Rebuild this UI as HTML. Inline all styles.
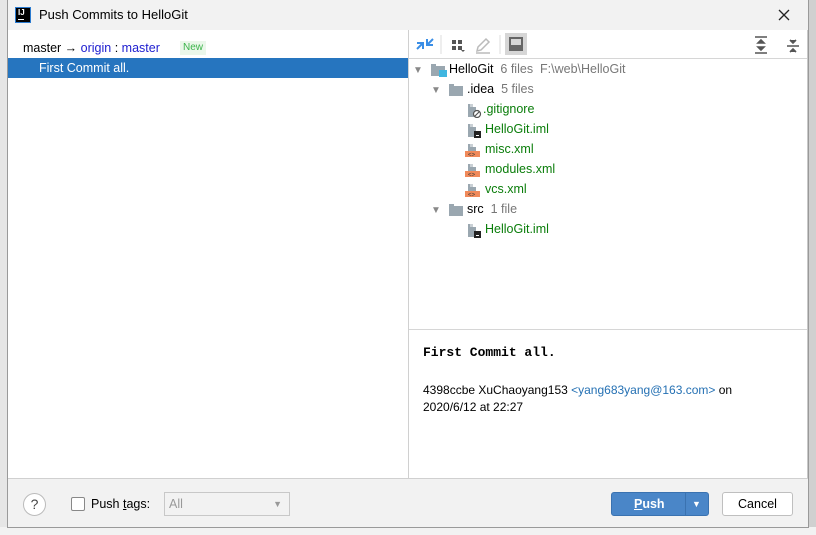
<!DOCTYPE html>
<html><head><meta charset="utf-8"><style>
*{margin:0;padding:0;box-sizing:border-box}
body{width:816px;height:535px;overflow:hidden;background:#f2f2f2;font-family:"Liberation Sans","Microsoft YaHei","Noto Sans CJK SC",sans-serif;font-size:12.5px;color:#000;position:relative}
.abs{position:absolute}
#bgl{left:0;top:0;width:7px;height:535px;background:#e6e6e6}
#bgb{left:0;top:527px;width:816px;height:8px;background:#f2f2f2}
#bgr{left:809px;top:0;width:7px;height:535px;background:#d0d0d0}
#dlg{left:7px;top:0;width:802px;height:528px;background:#f2f2f2;border:1px solid #9a9a9a;border-top:none}
#title{left:0;top:0;width:800px;height:30px;background:#f2f2f2}
#left{left:0;top:30px;width:401px;height:448px;background:#fff;border-right:1px solid #d0d0d0}
#right{left:401px;top:30px;width:399px;height:448px;background:#fff;border-right:1px solid #c8c8c8}
#foot{left:0;top:478px;width:800px;height:49px;background:#f2f2f2;border-top:1px solid #d0d0d0}
.row{position:absolute;height:20px;line-height:20px;white-space:nowrap}
.g{color:#0a7d0a}.gr{color:#777}
</style></head><body>
<div class="abs" id="bgl"></div><div class="abs" id="bgr"></div><div class="abs" id="bgb"></div>
<div class="abs" id="dlg">
 <div class="abs" id="title">
  <div class="abs" style="left:7px;top:7px;width:16px;height:16px;background:#000;border:1px solid #2b7bd0;color:#fff;font-size:8px;font-weight:bold;line-height:10px;padding-left:2px">IJ<div style="width:6px;height:1px;background:#fff;margin-top:1px"></div></div>
  <div class="abs" style="left:31px;top:7px;font-size:13px">Push Commits to HelloGit</div>
  <svg class="abs" style="left:770px;top:9px" width="12" height="12"><path d="M1 1L11 11M11 1L1 11" stroke="#222" stroke-width="1.3"/></svg>
 </div>
 <div class="abs" id="left">
  <div class="row" style="left:15px;top:8px">master → <span style="color:#2020d0">origin</span> : <span style="color:#2020d0">master</span></div>
  <div class="abs" style="left:172px;top:11px;height:14px;line-height:14px;padding:0 3px;background:#eaf7ea;color:#3cb44b;font-size:10px">New</div>
  <div class="row" style="left:0;top:28px;width:400px;background:#2675bf;color:#fff;padding-left:31px">First Commit all.</div>
 </div>
 <div class="abs" id="right">
  <svg class="abs" style="left:0;top:0" width="399" height="30">
   <path d="M8 19l6-6M8 13h6v6M24 9l-6 6M18 9v6h6" stroke="#3a8ee6" stroke-width="2" fill="none"/>
   <line x1="32" y1="5" x2="32" y2="24" stroke="#ddd"/>
   <rect x="43" y="10" width="4" height="4" fill="#555"/><rect x="49" y="10" width="4" height="4" fill="#555"/><rect x="43" y="16" width="4" height="4" fill="#555"/><rect x="49" y="16" width="4" height="4" fill="#555"/><path d="M52 20h4l-2 2z" fill="#555"/>
   <path d="M68 21l1-4 8-8 3 3-8 8zM67 23h14" stroke="#bbb" stroke-width="1.5" fill="none"/>
   <line x1="91" y1="5" x2="91" y2="24" stroke="#ddd"/>
   <rect x="96" y="3" width="22" height="22" fill="#d6d6d6"/><rect x="100" y="7" width="14" height="14" fill="#666"/><rect x="102" y="9" width="10" height="6" fill="#d6d6d6"/>
   <path d="M346 7h12M346 23h12M352 10l-3 3h6zM352 20l-3-3h6z" stroke="#555" stroke-width="1.6" fill="#555"/>
   <path d="M378 16h12M381 10l3 3 3-3M381 22l3-3 3 3" stroke="#555" stroke-width="1.6" fill="#555"/>
  </svg>
  <div class="abs" style="left:0;top:28px;width:398px;height:1px;background:#d6d6d6"></div>
  <div class="row" style="left:4px;top:29px"><span style="color:#888;font-size:10px">▼</span></div>
  <svg class="abs" style="left:22px;top:33px" width="16" height="14"><rect x="0" y="1" width="5" height="3" fill="#9aa7b0"/><rect x="0" y="3" width="14" height="10" fill="#9aa7b0"/><rect x="8" y="7" width="8" height="7" fill="#40b6e0"/></svg>
  <div class="row" style="left:40px;top:29px">HelloGit <span class="gr">&nbsp;6 files &nbsp;F:\web\HelloGit</span></div>
  <div class="row" style="left:22px;top:49px"><span style="color:#888;font-size:10px">▼</span></div>
  <svg class="abs" style="left:40px;top:53px" width="16" height="14"><rect x="0" y="1" width="5" height="3" fill="#9aa7b0"/><rect x="0" y="3" width="14" height="10" fill="#9aa7b0"/></svg>
  <div class="row" style="left:58px;top:49px">.idea <span class="gr">&nbsp;5 files</span></div>
  <svg class="abs" style="left:57px;top:72px" width="16" height="16"><path d="M2 2h5v3h3v10H2z" fill="#9aa7b0"/><path d="M4 2h3v3H4z" fill="#c9d0d5"/><circle cx="11" cy="12" r="3.5" fill="#fff" stroke="#555" stroke-width="1.2"/><line x1="8.5" y1="14.5" x2="13.5" y2="9.5" stroke="#555" stroke-width="1.2"/></svg>
  <div class="row g" style="left:74px;top:69px">.gitignore</div>
  <svg class="abs" style="left:57px;top:92px" width="16" height="16"><path d="M2 2h5v3h3v10H2z" fill="#9aa7b0"/><path d="M4 2h3v3H4z" fill="#c9d0d5"/><rect x="8" y="9" width="7" height="7" fill="#222"/><rect x="10" y="13" width="3" height="1" fill="#fff"/></svg>
  <div class="row g" style="left:76px;top:89px">HelloGit.iml</div>
  <svg class="abs" style="left:56px;top:112px" width="18" height="16"><path d="M3 2h5v3h3v5H3z" fill="#9aa7b0"/><path d="M5 2h3v3H5z" fill="#c9d0d5"/><rect x="0" y="9" width="15" height="6" fill="#f08a5b"/><text x="3" y="14.5" font-size="6" fill="#333" font-family="Liberation Sans">&lt;&gt;</text></svg>
  <div class="row g" style="left:76px;top:109px">misc.xml</div>
  <svg class="abs" style="left:56px;top:132px" width="18" height="16"><path d="M3 2h5v3h3v5H3z" fill="#9aa7b0"/><path d="M5 2h3v3H5z" fill="#c9d0d5"/><rect x="0" y="9" width="15" height="6" fill="#f08a5b"/><text x="3" y="14.5" font-size="6" fill="#333" font-family="Liberation Sans">&lt;&gt;</text></svg>
  <div class="row g" style="left:76px;top:129px">modules.xml</div>
  <svg class="abs" style="left:56px;top:152px" width="18" height="16"><path d="M3 2h5v3h3v5H3z" fill="#9aa7b0"/><path d="M5 2h3v3H5z" fill="#c9d0d5"/><rect x="0" y="9" width="15" height="6" fill="#f08a5b"/><text x="3" y="14.5" font-size="6" fill="#333" font-family="Liberation Sans">&lt;&gt;</text></svg>
  <div class="row g" style="left:76px;top:149px">vcs.xml</div>
  <div class="row" style="left:22px;top:169px"><span style="color:#888;font-size:10px">▼</span></div>
  <svg class="abs" style="left:40px;top:173px" width="16" height="14"><rect x="0" y="1" width="5" height="3" fill="#9aa7b0"/><rect x="0" y="3" width="14" height="10" fill="#9aa7b0"/></svg>
  <div class="row" style="left:58px;top:169px">src <span class="gr">&nbsp;1 file</span></div>
  <svg class="abs" style="left:57px;top:192px" width="16" height="16"><path d="M2 2h5v3h3v10H2z" fill="#9aa7b0"/><path d="M4 2h3v3H4z" fill="#c9d0d5"/><rect x="8" y="9" width="7" height="7" fill="#222"/><rect x="10" y="13" width="3" height="1" fill="#fff"/></svg>
  <div class="row g" style="left:76px;top:189px">HelloGit.iml</div>
  <div class="abs" style="left:0;top:299px;width:398px;height:1px;background:#d6d6d6"></div>
  <div class="abs" style="left:14px;top:315px;font-family:'Liberation Mono',monospace;font-weight:bold;font-size:13px">First Commit all.</div>
  <div class="abs" style="left:14px;top:352px;line-height:17px;font-size:12px">4398ccbe XuChaoyang153 <span style="color:#2470b3">&lt;yang683yang@163.com&gt;</span> on<br>2020/6/12 at 22:27</div>
 </div>
 <div class="abs" id="foot">
  <div class="abs" style="left:15px;top:14px;width:23px;height:23px;border-radius:50%;background:#fff;border:1px solid #bbb;text-align:center;line-height:21px;font-size:14px;color:#444">?</div>
  <div class="abs" style="left:63px;top:18px;width:14px;height:14px;background:#fff;border:1px solid #888;border-radius:2px"></div>
  <div class="abs" style="left:83px;top:18px">Push <u>t</u>ags:</div>
  <div class="abs" style="left:156px;top:13px;width:126px;height:24px;border:1px solid #c8c8c8;background:#f2f2f2;color:#999;padding-left:4px;line-height:22px">All<span style="position:absolute;right:7px;top:0;font-size:9px;color:#999">▼</span></div>
  <div class="abs" style="left:603px;top:13px;width:98px;height:24px;background:#4a86c8;border:1px solid #3a72b0;border-radius:3px;color:#fff;font-weight:bold;line-height:22px">
   <span style="position:absolute;left:22px"><u>P</u>ush</span>
   <span style="position:absolute;left:73px;top:0;width:1px;height:22px;background:#3a72b0"></span>
   <span style="position:absolute;left:80px;top:0;font-size:9px">▼</span></div>
  <div class="abs" style="left:714px;top:13px;width:71px;height:24px;background:#fff;border:1px solid #bfbfbf;border-radius:3px;text-align:center;line-height:22px">Cancel</div>
 </div>
</div>
</body></html>
